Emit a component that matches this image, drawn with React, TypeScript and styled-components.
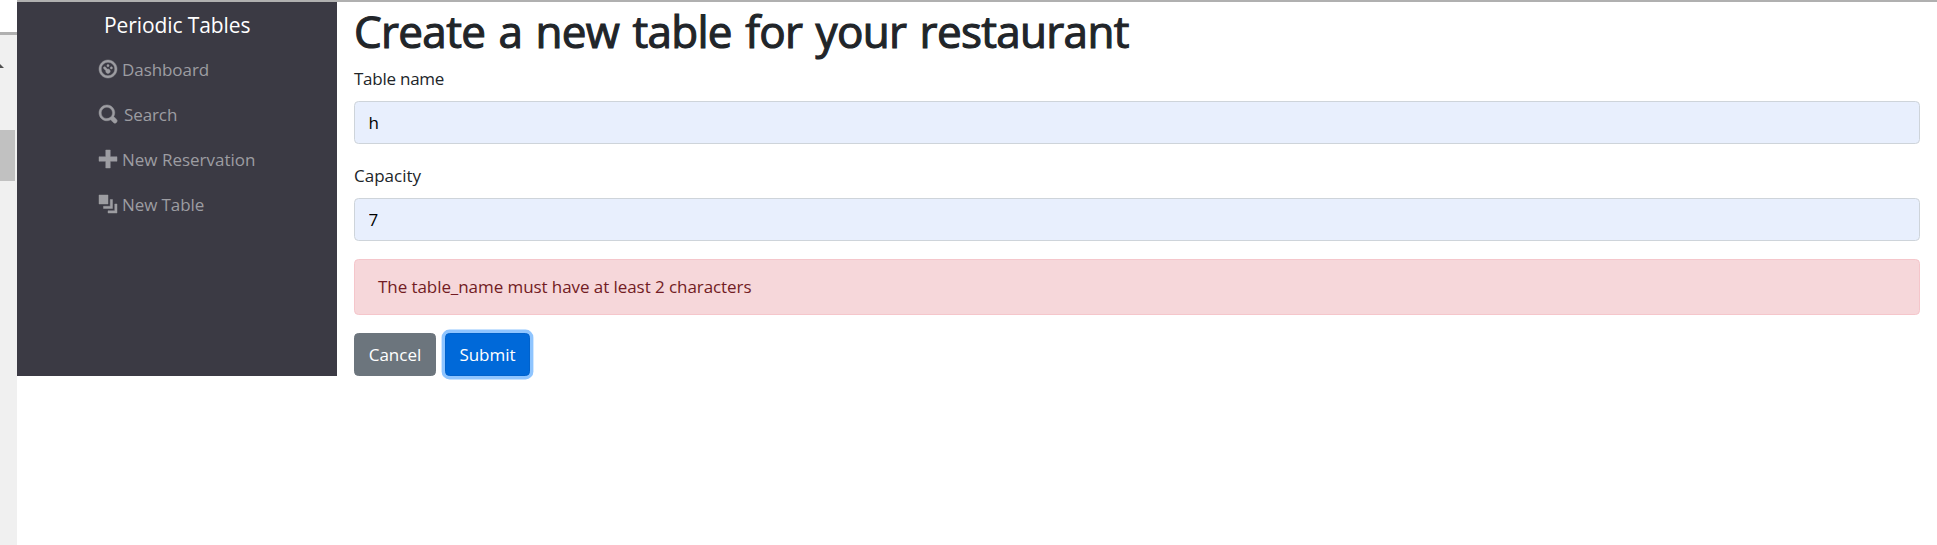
import React from "react";
import styled, { createGlobalStyle } from "styled-components";

const GlobalStyle = createGlobalStyle`
  *, *::before, *::after { box-sizing: border-box; }
  body {
    margin: 0;
    background: #fff;
    color: #212529;
    font: 400 17px/27px "Open Sans", "Noto Sans", sans-serif;
    overflow: hidden;
  }
`;

const Page = styled.div`
  display: flex;
  height: 545px;
`;

const ScrollStrip = styled.div`
  flex: none;
  width: 17px;
  display: flex;
  flex-direction: column;
  background: #f0f0f0;
`;

const StripHead = styled.div`
  height: 35px;
  background: #fff;
  border-bottom: 3px solid #b0b0b0;
`;

const StripArrow = styled.svg`
  display: block;
  width: 4px;
  height: 4px;
  margin-top: 29px;
`;

const StripThumb = styled.div`
  width: 15px;
  height: 51px;
  margin-top: 62px;
  background: #c1c1c1;
`;

const AppArea = styled.div`
  flex: 1;
  display: flex;
  align-items: flex-start;
  border-top: 2px solid #b0b0b0;
`;

const Sidebar = styled.nav`
  flex: none;
  width: 320px;
  height: 374px;
  padding: 10px 0 0 82px;
  background: #3b3a44;
`;

const Brand = styled.div`
  padding-left: 5px;
  font-size: 21px;
  line-height: 27px;
  letter-spacing: -0.1px;
  color: #fff;
  white-space: nowrap;
`;

const NavList = styled.ul`
  list-style: none;
  margin: 8px 0 0;
  padding: 0;
`;

const NavItem = styled.li<{ $gap?: number; $spacing?: number }>`
  display: flex;
  align-items: center;
  gap: ${(p) => p.$gap ?? 5}px;
  height: 44px;
  margin-bottom: 1px;
  color: #9d9da2;
  letter-spacing: ${(p) => p.$spacing ?? 0}px;
  white-space: nowrap;
`;

const NavText = styled.span`
  padding-top: 1px;
`;

const Icon = styled.svg`
  flex: none;
  width: 18px;
  height: 18px;
  overflow: visible;
  fill: currentColor;
  stroke: currentColor;
  stroke-width: 0.2;
`;

const Main = styled.main`
  flex: 1;
  padding: 0 17px;
`;

const Title = styled.h1`
  margin: 2px 0 7px;
  font-size: 44px;
  font-weight: 400;
  line-height: 54px;
  letter-spacing: -0.68px;
  word-spacing: 2.5px;
  -webkit-text-stroke: 1.1px currentColor;
  white-space: nowrap;
`;

const Field = styled.div`
  margin-bottom: 18px;
`;

const Label = styled.label<{ $spacing?: number }>`
  display: block;
  height: 27px;
  margin-bottom: 9px;
  letter-spacing: ${(p) => p.$spacing ?? 0}px;
`;

const Input = styled.input`
  display: block;
  width: 100%;
  height: 43px;
  padding: 0 13.5px;
  border: 1px solid #ced4da;
  border-radius: 4.5px;
  background: #e8effd;
  color: #000;
  font: inherit;
  outline: none;
`;

const Alert = styled.div`
  height: 56px;
  margin-bottom: 18px;
  padding: 13px 23px;
  border: 1px solid #f5c6cb;
  border-radius: 4.5px;
  background: #f6d7da;
  color: #721c24;
  letter-spacing: -0.07px;
`;

const Buttons = styled.div`
  display: flex;
  gap: 9px;
`;

const Button = styled.button<{ $primary?: boolean }>`
  width: ${(p) => (p.$primary ? 85 : 82)}px;
  height: 43px;
  padding: 0;
  border: 1px solid ${(p) => (p.$primary ? "#0062cc" : "#6c757d")};
  border-radius: 4.5px;
  background: ${(p) => (p.$primary ? "#0069d9" : "#6c757d")};
  box-shadow: ${(p) => (p.$primary ? "0 0 0 3.4px #8fc5ff" : "none")};
  color: #fff;
  font: inherit;
`;

const navItems = [
  {
    label: "Dashboard",
    spacing: -0.07,
    path: "M4 0c-2.2 0-4 1.8-4 4s1.8 4 4 4 4-1.8 4-4-1.8-4-4-4zm0 1c1.66 0 3 1.34 3 3s-1.34 3-3 3-3-1.34-3-3 1.34-3 3-3zm0 1c-.28 0-.5.22-.5.5s.22.5.5.5.5-.22.5-.5-.22-.5-.5-.5zm-1.66 1a.5.5 0 0 0-.19.84l.91.91c-.02.08-.06.16-.06.25 0 .55.45 1 1 1s1-.45 1-1-.45-1-1-1c-.09 0-.17.04-.25.06l-.91-.91a.5.5 0 0 0-.44-.16.5.5 0 0 0-.06 0zm3.16 0c-.28 0-.5.22-.5.5s.22.5.5.5.5-.22.5-.5-.22-.5-.5-.5z",
  },
  {
    label: "Search",
    gap: 7,
    spacing: -0.1,
    path: "M3.5 0c-1.93 0-3.5 1.57-3.5 3.5s1.57 3.5 3.5 3.5c.59 0 1.17-.14 1.66-.41a1 1 0 0 0 .13.13l1 1a1.02 1.02 0 1 0 1.44-1.44l-1-1a1 1 0 0 0-.16-.13c.27-.49.44-1.06.44-1.66 0-1.93-1.55-3.5-3.5-3.5zm0 1c1.39 0 2.5 1.11 2.5 2.5 0 .66-.24 1.27-.66 1.72-.01.01-.02.02-.03.03a1 1 0 0 0-.13.13c-.44.4-1.04.63-1.69.63-1.39 0-2.5-1.11-2.5-2.5s1.11-2.5 2.5-2.5z",
  },
  { label: "New Reservation", path: "M3 0v3h-3v2h3v3h2v-3h3v-2h-3v-3h-2z" },
  {
    label: "New Table",
    spacing: -0.1,
    path: "M0 0v4h4v-4h-4zm5 2v3h-3v1h4v-4h-1zm2 2v3h-3v1h4v-4h-1z",
  },
];

export default function App() {
  return (
    <>
      <GlobalStyle />
      <Page>
        <ScrollStrip>
          <StripHead />
          <StripArrow viewBox="0 0 4 4">
            <path d="M0 0 4 4H0z" fill="#505050" />
          </StripArrow>
          <StripThumb />
        </ScrollStrip>
        <AppArea>
          <Sidebar>
            <Brand>Periodic Tables</Brand>
            <NavList>
              {navItems.map((item) => (
                <NavItem key={item.label} $gap={item.gap} $spacing={item.spacing}>
                  <Icon viewBox="0 0 8 8">
                    <path d={item.path} />
                  </Icon>
                  <NavText>{item.label}</NavText>
                </NavItem>
              ))}
            </NavList>
          </Sidebar>
          <Main>
            <Title>Create a new table for your restaurant</Title>
            <Field>
              <Label htmlFor="table_name" $spacing={-0.25}>
                Table name
              </Label>
              <Input id="table_name" defaultValue="h" />
            </Field>
            <Field>
              <Label htmlFor="capacity">Capacity</Label>
              <Input id="capacity" defaultValue="7" />
            </Field>
            <Alert>The table_name must have at least 2 characters</Alert>
            <Buttons>
              <Button type="button">Cancel</Button>
              <Button type="submit" $primary>
                Submit
              </Button>
            </Buttons>
          </Main>
        </AppArea>
      </Page>
    </>
  );
}
